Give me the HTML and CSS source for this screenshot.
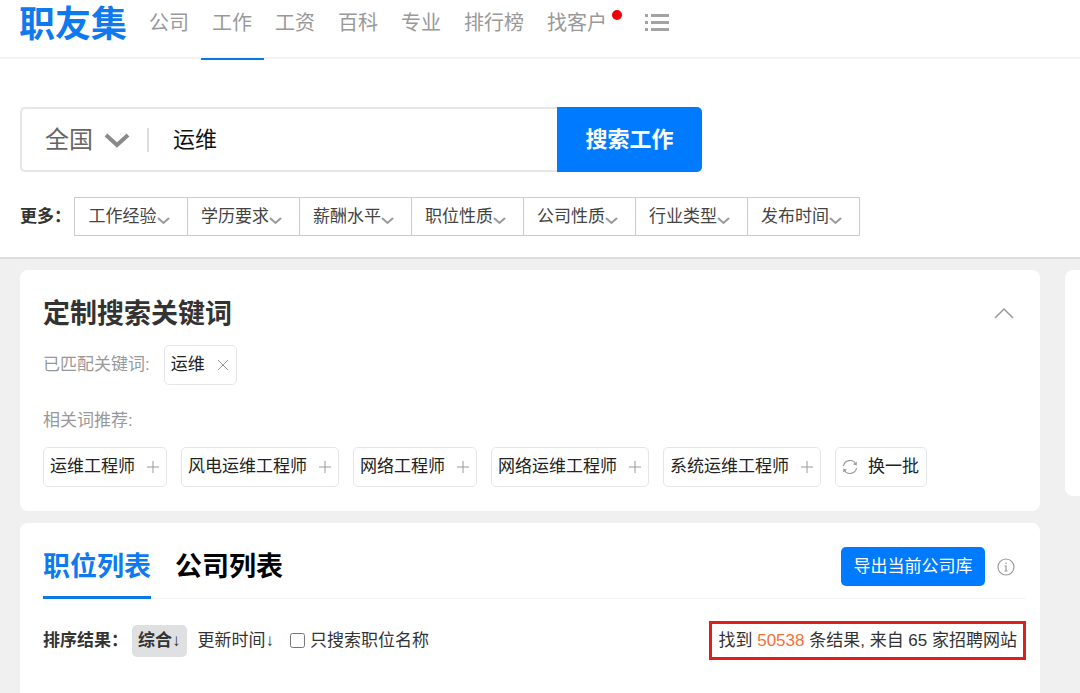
FILE: index.html
```html
<!DOCTYPE html>
<html lang="zh-CN">
<head>
    <meta charset="UTF-8">
    <meta name="viewport" content="width=device-width, initial-scale=1.0">
    <title>职友集</title>
    <link rel="stylesheet" href="styles.css">
</head>
<body>

    <header class="header">
        <a class="logo" href="#">职友集</a>
        <nav class="nav">
            <a href="#">公司</a>
            <a href="#" class="active">工作</a>
            <a href="#">工资</a>
            <a href="#">百科</a>
            <a href="#">专业</a>
            <a href="#">排行榜</a>
            <a href="#" class="has-dot">找客户</a>
        </nav>
        <button type="button" class="menu-btn" aria-label="更多导航">
            <svg width="25" height="20" viewBox="0 0 25 20" fill="#a3a3a3">
                <path d="M0 1h3v3H0zM0 8h3v3H0zM0 15h3v3H0z"/>
                <path d="M6 1h18v3H6zM6 8h18v3H6zM6 15h18v3H6z"/>
            </svg>
        </button>
    </header>

    <div class="search">
        <form class="search-form" action="#">
            <div class="search-box">
                <button type="button" class="city">全国
                    <svg width="26" height="16" viewBox="0 0 26 16" fill="none" stroke="#8a8a8a" stroke-width="4"><path d="M2 3l11 10 11-10"/></svg>
                </button>
                <input type="text" class="search-input" aria-label="关键词" value="运维">
            </div>
            <button type="submit" class="search-btn">搜索工作</button>
        </form>

        <div class="filter">
            <span class="filter-label">更多：</span>
            <div class="filter-list">
                <button type="button">工作经验<svg class="arrow" viewBox="0 0 13 8"><path d="M1 1l5.5 5L12 1"/></svg></button>
                <button type="button">学历要求<svg class="arrow" viewBox="0 0 13 8"><path d="M1 1l5.5 5L12 1"/></svg></button>
                <button type="button">薪酬水平<svg class="arrow" viewBox="0 0 13 8"><path d="M1 1l5.5 5L12 1"/></svg></button>
                <button type="button">职位性质<svg class="arrow" viewBox="0 0 13 8"><path d="M1 1l5.5 5L12 1"/></svg></button>
                <button type="button">公司性质<svg class="arrow" viewBox="0 0 13 8"><path d="M1 1l5.5 5L12 1"/></svg></button>
                <button type="button">行业类型<svg class="arrow" viewBox="0 0 13 8"><path d="M1 1l5.5 5L12 1"/></svg></button>
                <button type="button">发布时间<svg class="arrow" viewBox="0 0 13 8"><path d="M1 1l5.5 5L12 1"/></svg></button>
            </div>
        </div>
    </div>

    <div class="content">
        <main class="main">

            <!-- 定制搜索关键词 -->
            <section class="card keywords">
                <div class="card-head">
                    <h2>定制搜索关键词</h2>
                    <button type="button" class="collapse" aria-label="收起">
                        <svg width="20" height="14" viewBox="0 0 20 14" fill="none" stroke="#999" stroke-width="1.5"><path d="M1 11l9-9 9 9"/></svg>
                    </button>
                </div>
                <div class="matched">
                    <span class="label">已匹配关键词:</span>
                    <button type="button" class="tag">运维<svg class="tag-icon" viewBox="0 0 12 12"><path d="M1 1l10 10M11 1L1 11"/></svg></button>
                </div>
                <p class="label related">相关词推荐:</p>
                <div class="tags">
                    <button type="button" class="tag">运维工程师<svg class="tag-icon" viewBox="0 0 12 12"><path d="M6 0v12M0 6h12"/></svg></button>
                    <button type="button" class="tag">风电运维工程师<svg class="tag-icon" viewBox="0 0 12 12"><path d="M6 0v12M0 6h12"/></svg></button>
                    <button type="button" class="tag">网络工程师<svg class="tag-icon" viewBox="0 0 12 12"><path d="M6 0v12M0 6h12"/></svg></button>
                    <button type="button" class="tag">网络运维工程师<svg class="tag-icon" viewBox="0 0 12 12"><path d="M6 0v12M0 6h12"/></svg></button>
                    <button type="button" class="tag">系统运维工程师<svg class="tag-icon" viewBox="0 0 12 12"><path d="M6 0v12M0 6h12"/></svg></button>
                    <button type="button" class="tag refresh">
                        <svg width="16" height="16" viewBox="0 0 16 16" fill="none" stroke="#999" stroke-width="1.2">
                            <path d="M1.5 7A6.6 6.6 0 0 1 13.8 5M14.5 9A6.6 6.6 0 0 1 2.2 11"/>
                            <path d="M15 2.8L14.6 6.6 11 5.2zM1 13.2L1.4 9.4 5 10.8z" fill="#999" stroke="none"/>
                        </svg>换一批
                    </button>
                </div>
            </section>

            <!-- 职位列表 -->
            <section class="card jobs">
                <div class="tabs">
                    <a href="#" class="tab active">职位列表</a>
                    <a href="#" class="tab">公司列表</a>
                    <div class="export">
                        <button type="button" class="export-btn">导出当前公司库</button>
                        <svg width="18" height="18" viewBox="0 0 18 18" fill="none" stroke="#999" stroke-width="1.2">
                            <circle cx="9" cy="9" r="8"/>
                            <path d="M9 4.5v1.5M7.5 8H9v5M7.5 13h3"/>
                        </svg>
                    </div>
                </div>
                <div class="sort">
                    <span class="sort-label">排序结果：</span>
                    <a href="#" class="sort-item active">综合<span>↓</span></a>
                    <a href="#" class="sort-item">更新时间<span>↓</span></a>
                    <input type="checkbox" id="only-title">
                    <label for="only-title">只搜索职位名称</label>
                    <div class="result">找到 <em>50538</em> 条结果, 来自 65 家招聘网站</div>
                </div>
            </section>

        </main>
        <aside class="side"></aside>
    </div>

</body>
</html>
```

FILE: styles.css
```css
* {
    box-sizing: border-box;
}

body {
    display: flex;
    flex-direction: column;
    margin: 0;
    min-height: 100vh;
    background-color: #f0f0f0;
    color: #333;
    font-family: "Liberation Sans", "Noto Sans CJK SC", sans-serif;
    font-size: 17px;
    line-height: 24px;
}

a {
    color: inherit;
    text-decoration: none;
}

button, input {
    font-family: inherit;
    font-size: inherit;
    line-height: inherit;
    color: inherit;
}

button {
    padding: 0;
    border: none;
    background: none;
    cursor: pointer;
    white-space: nowrap;
}

svg {
    flex: none;
}

/* header */
.header {
    display: flex;
    height: 59px;
    padding-left: 19px;
    background-color: #fff;
    border-bottom: 2px solid #f2f2f2;
}

.logo {
    margin-right: 11px;
    color: #0f7af0;
    font-size: 36px;
    font-weight: bold;
    line-height: 50px;
}

.nav {
    display: flex;
    color: #999;
    font-size: 20px;
    line-height: 46px;
}

    .nav a {
        position: relative;
        height: 60px;
        padding: 0 12px 0 11px;
    }

    .nav a.active {
        border-bottom: 2px solid #0b78e3;
    }

    /* red dot over the text corner */
    .nav .has-dot:after {
        position: absolute;
        content: "";
        top: 10px;
        right: -3px;
        width: 10px;
        height: 10px;
        border-radius: 50%;
        background-color: #f00000;
    }

.menu-btn {
    display: flex;
    align-items: center;
    height: 46px;
    margin-left: 26px;
}

/* search */
.search {
    padding: 48px 20px 21px;
    background-color: #fff;
    border-bottom: 2px solid #ddd;
}

.search-form {
    display: flex;
    max-width: 682px;
    height: 65px;
}

.search-box {
    display: flex;
    flex: 1;
    align-items: center;
    border: 2px solid #e6e6e6;
    border-right: none;
    border-radius: 5px 0 0 5px;
}

.city {
    display: flex;
    align-items: center;
    gap: 11px;
    padding: 0 17px 0 23px;
    border-right: 2px solid #ddd;
    color: #666;
    font-size: 24px;
}

.search-input {
    flex: 1;
    min-width: 0;
    padding: 0 24px;
    border: none;
    outline: none;
    color: #111;
    font-size: 22px;
    line-height: 32px;
}

.search-btn {
    width: 145px;
    border-radius: 0 5px 5px 0;
    background-color: #007bff;
    color: #fff;
    font-size: 22px;
    font-weight: bold;
}

.filter {
    display: flex;
    align-items: center;
    margin-top: 25px;
}

.filter-label {
    width: 54px;
    font-weight: bold;
    white-space: nowrap;
}

.filter-list {
    display: flex;
    border: 1px solid #ccc;
}

    .filter-list button {
        display: flex;
        align-items: center;
        justify-content: center;
        width: 112px;
        height: 37px;
        padding-right: 4px;
        color: #444;
    }

    .filter-list button + button {
        border-left: 1px solid #ccc;
    }

.arrow {
    width: 13px;
    height: 8px;
    margin-top: 8px;
    fill: none;
    stroke: #999;
    stroke-width: 2;
}

/* content */
.content {
    display: flex;
    flex: 1;
    gap: 25px;
    padding: 11px 0 0 20px;
}

.main {
    display: flex;
    flex: 1;
    flex-direction: column;
    gap: 12px;
    min-width: 0;
}

.side {
    width: 15px;
    height: 226px;
    border-radius: 8px 0 0 8px;
    background-color: #fff;
}

.card {
    padding: 24px 14px 24px 23px;
    border-radius: 8px;
    background-color: #fff;
}

.card-head {
    display: flex;
    align-items: center;
    justify-content: space-between;
}

    .card-head h2 {
        margin: 0;
        font-size: 27px;
        line-height: 40px;
    }

.collapse {
    display: flex;
    margin-right: 12px;
}

.label {
    color: #999;
}

.matched {
    display: flex;
    align-items: center;
    gap: 14px;
    margin-top: 11px;
}

.related {
    margin: 24px 0 14px;
}

.tags {
    display: flex;
    flex-wrap: wrap;
    gap: 14px;
}

.tag {
    display: flex;
    align-items: center;
    gap: 12px;
    height: 40px;
    padding: 0 7px 0 6px;
    border: 1px solid #e6e6e6;
    border-radius: 5px;
    color: #222;
}

.tag-icon {
    width: 12px;
    height: 12px;
    fill: none;
    stroke: #999;
}

.refresh {
    gap: 10px;
}

/* job list, runs down to the page end */
.jobs {
    flex: 1;
    border-radius: 8px 8px 0 0;
}

.tabs {
    display: flex;
    align-items: flex-start;
    gap: 24px;
    border-bottom: 1px solid #f5f5f5;
}

.tab {
    height: 52px;
    margin-bottom: -1px;
    color: #000;
    font-size: 27px;
    font-weight: bold;
    line-height: 40px;
}

    .tab.active {
        border-bottom: 3px solid #0b78e3;
        color: #0f7af0;
    }

.export {
    display: flex;
    align-items: center;
    gap: 12px;
    margin-left: auto;
    padding-right: 11px;
}

.export-btn {
    width: 144px;
    height: 39px;
    border-radius: 5px;
    background-color: #007bff;
    color: #fff;
}

.sort {
    display: flex;
    align-items: center;
    margin-top: 22px;
}

.sort-label {
    width: 89px;
    font-weight: bold;
    white-space: nowrap;
}

.sort-item {
    margin-right: 16px;
}

    .sort-item.active {
        margin-right: 11px;
        padding: 4px 6px;
        border-radius: 5px;
        background-color: #dfe0e2;
        font-weight: bold;
    }

    .sort-item span {
        font-weight: normal;
    }

.sort input {
    width: 15px;
    height: 15px;
    margin: 0 5px 0 0;
}

.result {
    margin-left: auto;
    padding: 5px 6px 4px;
    border: 3px solid #e01f1a;
}

    .result em {
        color: #f7703c;
        font-style: normal;
    }
```
